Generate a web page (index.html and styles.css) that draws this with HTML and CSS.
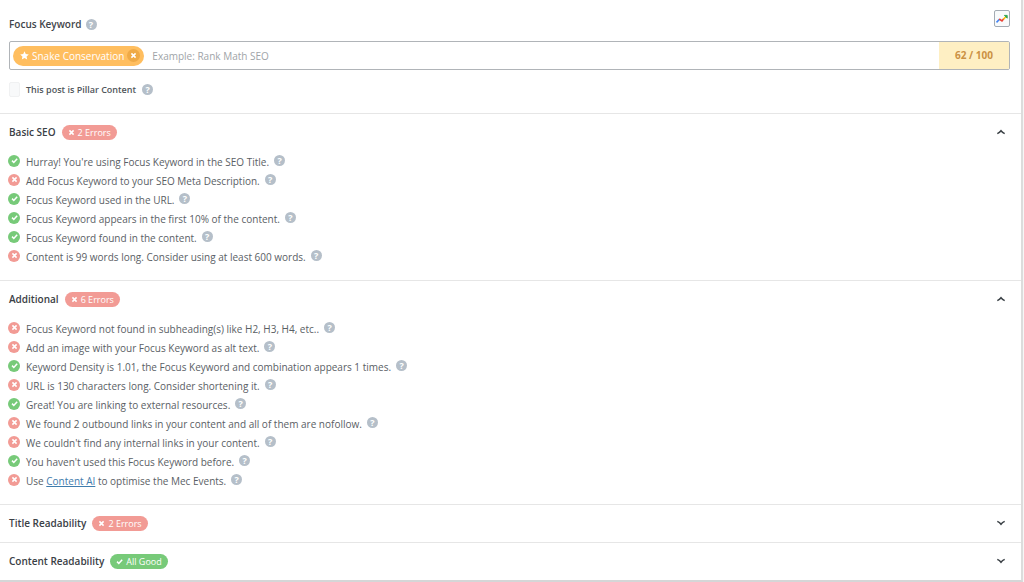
FILE: index.html
```html
<!DOCTYPE html>
<html lang="en">
<head>
    <meta charset="UTF-8">
    <meta name="viewport" content="width=device-width, initial-scale=1.0">
    <title>SEO Analysis</title>
    <link rel="stylesheet" href="styles.css">
</head>
<body>
    <svg class="sprite" aria-hidden="true">
        <symbol id="cross" viewBox="0 0 10 10"><path d="M2 2l6 6M8 2l-6 6" fill="none" stroke="currentColor" stroke-width="2.2"/></symbol>
        <symbol id="check" viewBox="0 0 10 10"><path d="M1.5 5.2l2.5 2.6 4.8-5.4" fill="none" stroke="currentColor" stroke-width="2.2"/></symbol>
        <symbol id="star" viewBox="0 0 10 10"><path d="M5 .3l1.4 3.1 3.4.4-2.5 2.3.7 3.4L5 7.8 2 9.5l.7-3.4L.2 3.8l3.4-.4z" fill="currentColor"/></symbol>
        <symbol id="chevron" viewBox="0 0 10 10"><path d="M1.3 6.6Q3.6 5.6 5 3.7Q6.4 5.6 8.7 6.6" fill="none" stroke="currentColor" stroke-width="1.5"/></symbol>
    </svg>

    <main class="panel">
        <div class="focus">
            <div class="focus-head">
                <div class="focus-title">
                    <label for="keyword">Focus Keyword</label>
                    <button type="button" class="help">?</button>
                </div>
                <button type="button" class="trends" aria-label="Trends">
                    <svg viewBox="0 0 14 14">
                        <path d="M1.5 10.4l3-3.2" stroke="#4285f4" stroke-width="1.6"/>
                        <path d="M4.2 7l2.8 2 1.7-2.2" stroke="#ea4335" stroke-width="1.6"/>
                        <path d="M8.4 7.2l2.4-2.4" stroke="#fbbc04" stroke-width="1.6"/>
                        <path d="M9.4 3.4h2.8v2.8z" fill="#34a853" stroke="#34a853"/>
                    </svg>
                </button>
            </div>

            <div class="keyword-box">
                <span class="tag">
                    <svg class="tag-star"><use href="#star"/></svg>
                    Snake Conservation
                    <button type="button" class="tag-remove" aria-label="Remove"><svg><use href="#cross"/></svg></button>
                </span>
                <input type="text" id="keyword" placeholder="Example: Rank Math SEO">
                <span class="score">62 / 100</span>
            </div>

            <div class="pillar">
                <input type="checkbox" id="pillar">
                <label for="pillar">This post is Pillar Content</label>
                <button type="button" class="help">?</button>
            </div>
        </div>

        <section>
            <h2>
                <button type="button" class="toggle" aria-expanded="true">
                    Basic SEO
                    <span class="badge bad"><svg><use href="#cross"/></svg>2 Errors</span>
                    <svg class="arrow"><use href="#chevron"/></svg>
                </button>
            </h2>
            <ul>
                <li><span class="mark good"><svg><use href="#check"/></svg></span><span class="text">Hurray! You're using Focus Keyword in the SEO Title.</span><button type="button" class="help">?</button></li>
                <li><span class="mark bad"><svg><use href="#cross"/></svg></span><span class="text">Add Focus Keyword to your SEO Meta Description.</span><button type="button" class="help">?</button></li>
                <li><span class="mark good"><svg><use href="#check"/></svg></span><span class="text">Focus Keyword used in the URL.</span><button type="button" class="help">?</button></li>
                <li><span class="mark good"><svg><use href="#check"/></svg></span><span class="text">Focus Keyword appears in the first 10% of the content.</span><button type="button" class="help">?</button></li>
                <li><span class="mark good"><svg><use href="#check"/></svg></span><span class="text">Focus Keyword found in the content.</span><button type="button" class="help">?</button></li>
                <li><span class="mark bad"><svg><use href="#cross"/></svg></span><span class="text">Content is 99 words long. Consider using at least 600 words.</span><button type="button" class="help">?</button></li>
            </ul>
        </section>

        <section>
            <h2>
                <button type="button" class="toggle" aria-expanded="true">
                    Additional
                    <span class="badge bad"><svg><use href="#cross"/></svg>6 Errors</span>
                    <svg class="arrow"><use href="#chevron"/></svg>
                </button>
            </h2>
            <ul>
                <li><span class="mark bad"><svg><use href="#cross"/></svg></span><span class="text">Focus Keyword not found in subheading(s) like H2, H3, H4, etc..</span><button type="button" class="help">?</button></li>
                <li><span class="mark bad"><svg><use href="#cross"/></svg></span><span class="text">Add an image with your Focus Keyword as alt text.</span><button type="button" class="help">?</button></li>
                <li><span class="mark good"><svg><use href="#check"/></svg></span><span class="text">Keyword Density is 1.01, the Focus Keyword and combination appears 1 times.</span><button type="button" class="help">?</button></li>
                <li><span class="mark bad"><svg><use href="#cross"/></svg></span><span class="text">URL is 130 characters long. Consider shortening it.</span><button type="button" class="help">?</button></li>
                <li><span class="mark good"><svg><use href="#check"/></svg></span><span class="text">Great! You are linking to external resources.</span><button type="button" class="help">?</button></li>
                <li><span class="mark bad"><svg><use href="#cross"/></svg></span><span class="text">We found 2 outbound links in your content and all of them are nofollow.</span><button type="button" class="help">?</button></li>
                <li><span class="mark bad"><svg><use href="#cross"/></svg></span><span class="text">We couldn't find any internal links in your content.</span><button type="button" class="help">?</button></li>
                <li><span class="mark good"><svg><use href="#check"/></svg></span><span class="text">You haven't used this Focus Keyword before.</span><button type="button" class="help">?</button></li>
                <li><span class="mark bad"><svg><use href="#cross"/></svg></span><span class="text">Use <a href="#">Content AI</a> to optimise the Mec Events.</span><button type="button" class="help">?</button></li>
            </ul>
        </section>

        <section>
            <h2>
                <button type="button" class="toggle" aria-expanded="false">
                    Title Readability
                    <span class="badge bad"><svg><use href="#cross"/></svg>2 Errors</span>
                    <svg class="arrow"><use href="#chevron"/></svg>
                </button>
            </h2>
        </section>

        <section>
            <h2>
                <button type="button" class="toggle" aria-expanded="false">
                    Content Readability
                    <span class="badge good"><svg><use href="#check"/></svg>All Good</span>
                    <svg class="arrow"><use href="#chevron"/></svg>
                </button>
            </h2>
        </section>
    </main>
</body>
</html>
```
FILE: styles.css
```css
* {
    box-sizing: border-box;
}

body {
    margin: 0;
    background-color: #f6f6f6;
    font-family: "Segoe UI", "Open Sans", "Noto Sans", sans-serif;
    font-size: 10px;
    color: #5a6065;
}

button, input {
    font: inherit;
    color: inherit;
    margin: 0;
    padding: 0;
    border: none;
    background: none;
}

button {
    cursor: pointer;
}

.sprite {
    display: none;
}

.panel {
    margin-right: 1px;
    background-color: #fff;
    border-right: 2px solid #dcdcdc;
    border-bottom: 2px solid #d5d6d7;
}

.focus {
    padding: 10px 11px 14px 9px;
}

.focus-head {
    display: flex;
    justify-content: space-between;
    align-items: flex-start;
    height: 31px;
}

.focus-title {
    display: flex;
    align-items: center;
    gap: 4px;
    padding-top: 7px;
    font-weight: 600;
    color: #3f454a;
}

.help {
    width: 11px;
    height: 11px;
    border-radius: 50%;
    background-color: #b5bfc9;
    color: #fff;
    font-size: 9px;
    font-weight: 700;
    line-height: 11px;
    text-align: center;
}

.trends {
    display: flex;
    width: 16px;
    height: 17px;
    border: 1px solid #a3abb3;
    border-radius: 2px;
    background-color: #f8fafb;
    align-items: center;
    justify-content: center;
}

.trends svg {
    width: 14px;
    height: 14px;
    fill: none;
}

.keyword-box {
    display: flex;
    align-items: center;
    height: 29px;
    padding-left: 3px;
    border: 1px solid #b0b4b8;
    border-radius: 2px;
    overflow: hidden;
}

.tag {
    display: flex;
    align-items: center;
    gap: 3px;
    height: 20px;
    padding: 0 4px 0 7px;
    border-radius: 10px;
    background-color: #ffbe5f;
    color: #fff;
}

.tag-star {
    width: 9px;
    height: 9px;
}

.tag-remove {
    display: flex;
    width: 13px;
    height: 13px;
    border-radius: 50%;
    background-color: #efaa47;
    align-items: center;
    justify-content: center;
}

.tag-remove svg {
    width: 7px;
    height: 7px;
}

.keyword-box input {
    flex: 1;
    min-width: 0;
    height: 100%;
    padding-left: 8px;
    outline: none;
}

.keyword-box input::placeholder {
    color: #a0a4a8;
    opacity: 1;
}

.score {
    width: 70px;
    background-color: #feefc3;
    color: #cb9144;
    font-weight: 700;
    line-height: 27px;
    text-align: center;
}

.pillar {
    display: flex;
    align-items: center;
    gap: 6px;
    margin-top: 10px;
    height: 19px;
    font-size: 9px;
    font-weight: 600;
    color: #50565b;
}

.pillar input {
    appearance: none;
    width: 11px;
    height: 15px;
    border: 1px solid #f0f1f2;
    border-radius: 2px;
    background-color: #f8f9fa;
}

section {
    border-top: 1px solid #e6e6e6;
}

h2 {
    margin: 0;
    font-size: 10px;
}

.toggle {
    display: flex;
    align-items: center;
    gap: 6px;
    width: 100%;
    height: 37px;
    padding: 0 15px 1px 9px;
    font-weight: 600;
    color: #3a4045;
}

.badge {
    display: flex;
    align-items: center;
    gap: 3px;
    height: 15px;
    padding: 0 6px;
    border-radius: 8px;
    color: #fff;
    font-size: 9px;
    font-weight: 400;
}

.badge svg {
    width: 7px;
    height: 7px;
}

.bad {
    background-color: #f29b95;
}

.good {
    background-color: #77ca79;
}

.arrow {
    width: 10px;
    height: 10px;
    margin-left: auto;
}

.toggle[aria-expanded="false"] .arrow {
    transform: rotate(180deg);
}

ul {
    list-style: none;
    margin: 0;
    padding: 0 8px 15px;
}

li {
    display: flex;
    align-items: center;
    height: 19px;
}

.mark {
    display: flex;
    width: 12px;
    height: 12px;
    margin-right: 6px;
    border-radius: 50%;
    color: #fff;
    align-items: center;
    justify-content: center;
}

.mark svg {
    width: 7px;
    height: 7px;
}

.text {
    padding-top: 2px;
}

li .help {
    margin-left: 5px;
}

a {
    color: #3f7cad;
}
```
